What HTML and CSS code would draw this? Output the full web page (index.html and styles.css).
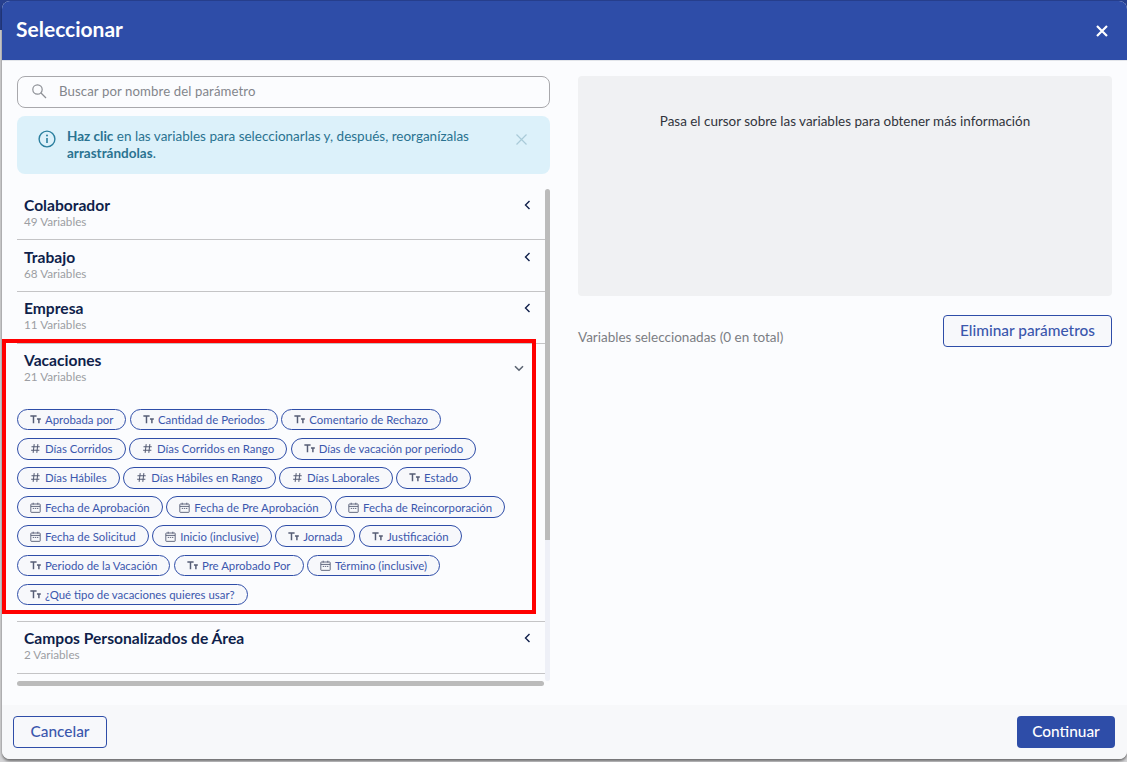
FILE: index.html
```html
<!DOCTYPE html>
<html lang="es">
<head>
    <meta charset="UTF-8">
    <meta name="viewport" content="width=device-width, initial-scale=1.0">
    <title>Seleccionar</title>
    <link rel="stylesheet" href="styles.css">
</head>
<body>
    <svg class="sprites" width="0" height="0">
        <symbol id="ic-text" viewBox="0 0 12 10">
            <path d="M0.400 1.100h6.800M3.800 1.100v8M7.600 4.400h4.200M9.700 4.400v4.700" fill="none" stroke="currentColor" stroke-width="1.600"/>
        </symbol>
        <symbol id="ic-num" viewBox="0 0 12 12">
            <path d="M4.600 1.200l-1.200 9.600M8.600 1.200l-1.200 9.600M1.600 4.200h9M1.200 7.800h9" fill="none" stroke="currentColor" stroke-width="1.100"/>
        </symbol>
        <symbol id="ic-date" viewBox="0 0 12 12">
            <path d="M1.500 2.200h9a.6.6 0 0 1 .6.6v7.900a.6.6 0 0 1-.6.6h-9a.6.6 0 0 1-.6-.6V2.800a.6.6 0 0 1 .6-.6zM1 4.800h10M3.500 .8v2M8.500 .8v2M3 7h1.500M5.300 7h1.500M7.600 7h1.500" fill="none" stroke="currentColor" stroke-width="1"/>
        </symbol>
    </svg>

    <div class="modal">
        <header class="modal-head">
            <h1>Seleccionar</h1>
            <svg class="close" width="12" height="12" viewBox="0 0 12 12"><path d="M1 1l10 10M11 1L1 11" stroke="#fff" stroke-width="2.200"/></svg>
        </header>

        <div class="modal-body">
            <section class="col-left">
                <div class="search">
                    <svg width="16" height="16" viewBox="0 0 16 16"><circle cx="6.500" cy="6.500" r="4.700" fill="none" stroke="#8d9096" stroke-width="1.200"/><path d="M10 10l5 5" stroke="#8d9096" stroke-width="1.200"/></svg>
                    <span>Buscar por nombre del parámetro</span>
                </div>

                <div class="alert">
                    <svg class="alert-icon" width="18" height="18" viewBox="0 0 18 18"><circle cx="9" cy="9" r="7.900" fill="none" stroke="#2a7f9e" stroke-width="1.400"/><path d="M9 8v5" stroke="#2a7f9e" stroke-width="1.600"/><circle cx="9" cy="5.400" r="1" fill="#2a7f9e"/></svg>
                    <p><b>Haz clic</b> en las variables para seleccionarlas y, después, reorganízalas <b>arrastrándolas</b>.</p>
                    <svg class="alert-close" width="11" height="11" viewBox="0 0 11 11"><path d="M.5.500l10 10M10.500.500l-10 10" stroke="#a9cbd8" stroke-width="1.200"/></svg>
                </div>

                <div class="list">
                    <div class="list-inner">
                        <div class="acc">
                            <div class="acc-text"><h2>Colaborador</h2><small>49 Variables</small></div>
                            <svg class="chev" width="7" height="10" viewBox="0 0 7 10"><path d="M5.500 1L1.500 5l4 4" fill="none" stroke="#0f1f4b" stroke-width="1.400"/></svg>
                        </div>
                        <div class="acc">
                            <div class="acc-text"><h2>Trabajo</h2><small>68 Variables</small></div>
                            <svg class="chev" width="7" height="10" viewBox="0 0 7 10"><path d="M5.500 1L1.500 5l4 4" fill="none" stroke="#0f1f4b" stroke-width="1.400"/></svg>
                        </div>
                        <div class="acc">
                            <div class="acc-text"><h2>Empresa</h2><small>11 Variables</small></div>
                            <svg class="chev" width="7" height="10" viewBox="0 0 7 10"><path d="M5.500 1L1.500 5l4 4" fill="none" stroke="#0f1f4b" stroke-width="1.400"/></svg>
                        </div>
                        <div class="acc acc-open">
                            <div class="acc-row">
                                <div class="acc-text"><h2>Vacaciones</h2><small>21 Variables</small></div>
                                <svg class="chev-down" width="10" height="7" viewBox="0 0 10 7"><path d="M1 1.200l4 4 4-4" fill="none" stroke="#5b6472" stroke-width="1.600"/></svg>
                            </div>
                            <div class="chips">
                                <span class="chip"><svg class="ic"><use href="#ic-text"/></svg>Aprobada por</span>
                                <span class="chip"><svg class="ic"><use href="#ic-text"/></svg>Cantidad de Periodos</span>
                                <span class="chip"><svg class="ic"><use href="#ic-text"/></svg>Comentario de Rechazo</span>
                                <span class="chip"><svg class="ic"><use href="#ic-num"/></svg>Días Corridos</span>
                                <span class="chip"><svg class="ic"><use href="#ic-num"/></svg>Días Corridos en Rango</span>
                                <span class="chip"><svg class="ic"><use href="#ic-text"/></svg>Días de vacación por periodo</span>
                                <span class="chip"><svg class="ic"><use href="#ic-num"/></svg>Días Hábiles</span>
                                <span class="chip"><svg class="ic"><use href="#ic-num"/></svg>Días Hábiles en Rango</span>
                                <span class="chip"><svg class="ic"><use href="#ic-num"/></svg>Días Laborales</span>
                                <span class="chip"><svg class="ic"><use href="#ic-text"/></svg>Estado</span>
                                <span class="chip"><svg class="ic"><use href="#ic-date"/></svg>Fecha de Aprobación</span>
                                <span class="chip"><svg class="ic"><use href="#ic-date"/></svg>Fecha de Pre Aprobación</span>
                                <span class="chip"><svg class="ic"><use href="#ic-date"/></svg>Fecha de Reincorporación</span>
                                <span class="chip"><svg class="ic"><use href="#ic-date"/></svg>Fecha de Solicitud</span>
                                <span class="chip"><svg class="ic"><use href="#ic-date"/></svg>Inicio (inclusive)</span>
                                <span class="chip"><svg class="ic"><use href="#ic-text"/></svg>Jornada</span>
                                <span class="chip"><svg class="ic"><use href="#ic-text"/></svg>Justificación</span>
                                <span class="chip"><svg class="ic"><use href="#ic-text"/></svg>Periodo de la Vacación</span>
                                <span class="chip"><svg class="ic"><use href="#ic-text"/></svg>Pre Aprobado Por</span>
                                <span class="chip"><svg class="ic"><use href="#ic-date"/></svg>Término (inclusive)</span>
                                <span class="chip"><svg class="ic"><use href="#ic-text"/></svg>¿Qué tipo de vacaciones quieres usar?</span>
                            </div>
                        </div>
                        <div class="acc">
                            <div class="acc-text"><h2>Campos Personalizados de Área</h2><small>2 Variables</small></div>
                            <svg class="chev" width="7" height="10" viewBox="0 0 7 10"><path d="M5.500 1L1.500 5l4 4" fill="none" stroke="#0f1f4b" stroke-width="1.400"/></svg>
                        </div>
                    </div>
                </div>
            </section>

            <section class="col-right">
                <div class="info-box">Pasa el cursor sobre las variables para obtener más información</div>
                <div class="selected-row">
                    <span>Variables seleccionadas (0 en total)</span>
                    <button class="btn btn-outline btn-clear">Eliminar parámetros</button>
                </div>
            </section>
        </div>

        <footer class="modal-foot">
            <button class="btn btn-outline">Cancelar</button>
            <button class="btn btn-solid">Continuar</button>
        </footer>
    </div>

    <div class="highlight"></div>
</body>
</html>
```

FILE: styles.css
```css
* {
    box-sizing: border-box;
}
html, body {
    height: 100%;
}
body {
    margin: 0;
    overflow: hidden;
    background: linear-gradient(#27408f 30px, #d4d4d6 30px);
    font-family: "Lato", "Noto Sans", sans-serif;
    color: #0f1f4b;
}
.sprites {
    position: absolute;
}
.modal {
    margin: 1px 0 0 2px;
    width: 1125px;
    height: 758px;
    display: flex;
    flex-direction: column;
    background: #fbfcfe;
    border-radius: 8px;
    overflow: hidden;
    box-shadow: 0 2px 3px rgba(0, 0, 0, 0.5);
}
.modal-head {
    height: 60px;
    flex: none;
    background: #2e4da8;
    display: flex;
    align-items: center;
    justify-content: space-between;
    padding: 0 19px 0 14px;
    border-bottom: 1px solid #e2e5ea;
}
.modal-head h1 {
    margin: 0 0 5px;
    font-size: 21px;
    font-weight: 700;
    color: #fff;
}
.modal-body {
    flex: 1;
    display: flex;
    gap: 28px;
    padding: 15px 15px 0;
    min-height: 0;
}
.col-left {
    width: 533px;
    flex: none;
}
.col-right {
    width: 534px;
    flex: none;
}
.search {
    height: 32px;
    border: 1px solid #a8a8ac;
    border-radius: 8px;
    display: flex;
    align-items: center;
    gap: 12px;
    padding: 0 0 2px 13px;
    font-size: 13.200px;
    color: #83868c;
    letter-spacing: .1px;
}
.alert {
    position: relative;
    margin-top: 8px;
    height: 58px;
    background: #dcf1fa;
    border-radius: 8px;
    padding: 12px 60px 0 50px;
    font-size: 13.500px;
    line-height: 17px;
    color: #2a7391;
}
.alert p {
    margin: 0;
}
.alert-icon {
    position: absolute;
    left: 21px;
    top: 14px;
}
.alert-close {
    position: absolute;
    right: 23px;
    top: 18px;
}
.list {
    margin-top: 15px;
    height: 497px;
    overflow: hidden;
    position: relative;
}
/* barras de scroll dibujadas */
.list::before {
    content: "";
    position: absolute;
    top: 0;
    right: 0;
    width: 5px;
    height: 492px;
    background: linear-gradient(#bbbbbb 351px, #eef0f7 351px);
    border-radius: 3px;
}
.list::after {
    content: "";
    position: absolute;
    left: 0;
    bottom: 0;
    width: 527px;
    height: 5px;
    background: #bbbbbb;
    border-radius: 3px;
}
.list-inner {
    width: 528px;
    margin-top: -0.600px;
}
.acc {
    height: 51.750px;
    display: flex;
    align-items: flex-start;
    justify-content: space-between;
    padding: 7.500px 14px 0 7px;
    border-bottom: 1px solid #c4c4c6;
}
.acc-open {
    height: auto;
    display: block;
    padding: 0;
}
.acc-row {
    height: 65px;
    display: flex;
    align-items: flex-start;
    justify-content: space-between;
    padding: 7.500px 21px 0 7px;
}
.acc-text h2 {
    margin: 0;
    font-size: 15.600px;
    line-height: 18px;
    font-weight: 700;
    color: #0f1f4b;
}
.acc-text small {
    display: block;
    font-size: 11.700px;
    line-height: 15px;
    color: #9c9ea3;
}
.chev {
    margin-top: 4px;
}
.chev-down {
    margin-top: 14px;
}
.chips {
    display: flex;
    flex-wrap: wrap;
    gap: 7.500px 3.500px;
    padding-bottom: 15.400px;
}
.chip {
    height: 21.700px;
    display: inline-flex;
    align-items: center;
    gap: 4px;
    padding: 0 12px;
    border: 1px solid #2e4da8;
    border-radius: 11px;
    background: #f7f8fb;
    font-size: 11.400px;
    color: #3b57ad;
}
.ic {
    width: 11px;
    height: 11px;
    color: #555c74;
}
.info-box {
    height: 220px;
    background: #f0f1f3;
    border-radius: 4px;
    padding-top: 37px;
    text-align: center;
    font-size: 13.450px;
    color: #30343c;
}
.selected-row {
    margin-top: 19px;
    display: flex;
    justify-content: space-between;
    align-items: flex-start;
    font-size: 13.500px;
    color: #7b7e84;
}
.selected-row span {
    margin-top: 14px;
}
.btn {
    height: 32px;
    border-radius: 4px;
    padding: 0 0 2px;
    font-family: inherit;
    font-size: 15.400px;
    font-weight: 500;
}
.btn-outline {
    width: 94px;
    border: 1px solid #2e4da8;
    background: #f7f8fb;
    color: #3b57ad;
}
.btn-clear {
    width: 169px;
}
.btn-solid {
    width: 98px;
    border: 0;
    background: #2e4da8;
    color: #fff;
}
.modal-foot {
    height: 54px;
    flex: none;
    background: #f7f8fa;
    display: flex;
    align-items: center;
    justify-content: space-between;
    padding: 0 12px 0 11px;
}
/* recuadro rojo de la captura */
.highlight {
    position: absolute;
    left: 2px;
    top: 339px;
    width: 534px;
    height: 275px;
    border: 4px solid #ff0000;
    pointer-events: none;
}
```
